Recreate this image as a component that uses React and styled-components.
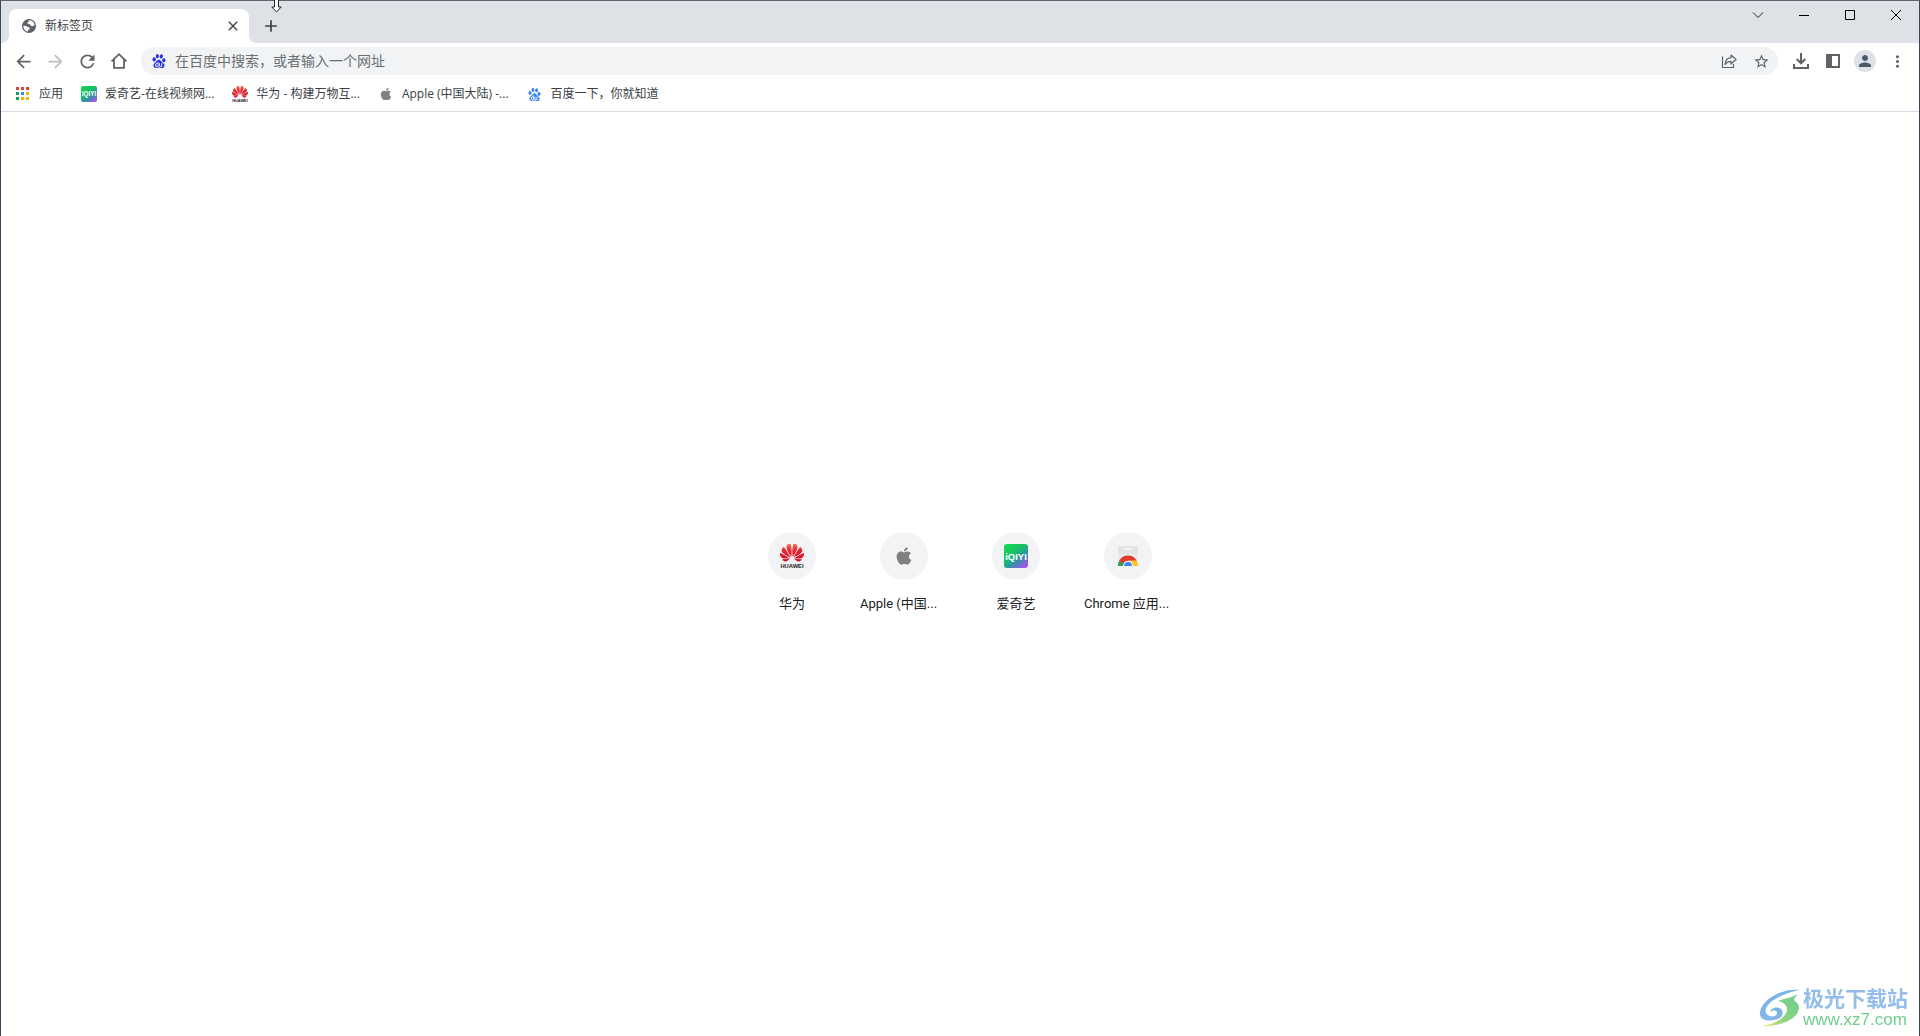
import React from 'react';
import styled, { createGlobalStyle } from 'styled-components';
import { MdArrowBack, MdArrowForward, MdRefresh, MdPerson, MdStarBorder, MdMoreVert, MdClose, MdAdd } from 'react-icons/md';
import { FaApple } from 'react-icons/fa';
import { SiBaidu, SiHuawei } from 'react-icons/si';

const GlobalStyle = createGlobalStyle`
  * {
    box-sizing: border-box;
  }
  body {
    margin: 0;
    background: #fff;
    font-family: 'Open Sans', 'Noto Sans CJK SC', sans-serif;
  }
  svg {
    display: block;
    flex: none;
  }
`;

const Window = styled.div`
  min-height: 100vh;
  display: flex;
  flex-direction: column;
  border: 1px solid #34495e;
  border-top-color: #62636d;
  border-bottom: 0;
`;

const TabStrip = styled.header`
  display: flex;
  align-items: flex-end;
  height: 42px;
  padding-left: 8px;
  background: #dee1e6;
`;

const Tab = styled.div`
  position: relative;
  display: flex;
  align-items: center;
  gap: 8px;
  width: 240px;
  height: 34px;
  padding: 0 8px 0 12px;
  background: #fff;
  border-radius: 8px 8px 0 0;
  color: #3c4043;
  &::before,
  &::after {
    content: '';
    position: absolute;
    bottom: 0;
    width: 8px;
    height: 8px;
  }
  &::before {
    left: -8px;
    background: radial-gradient(circle at 0 0, transparent 8px, #fff 8px);
  }
  &::after {
    right: -8px;
    background: radial-gradient(circle at 100% 0, transparent 8px, #fff 8px);
  }
`;

const TabTitle = styled.span`
  flex: 1;
  font-size: 12px;
  line-height: 16px;
`;

const IconButton = styled.button`
  display: flex;
  flex: none;
  align-items: center;
  justify-content: center;
  width: ${(props) => props.$size || 32}px;
  height: ${(props) => props.$size || 32}px;
  padding: 0;
  border: 0;
  border-radius: 50%;
  background: transparent;
  color: ${(props) => props.$color || '#5f6368'};
`;

const NewTab = styled(IconButton)`
  margin: 0 0 3px 8px;
`;

const WindowControls = styled.div`
  display: flex;
  align-self: flex-start;
  margin-left: auto;
`;

const WindowButton = styled.button`
  display: flex;
  align-items: center;
  justify-content: center;
  width: 46px;
  height: 28px;
  padding: 0;
  border: 0;
  background: transparent;
`;

const Toolbar = styled.nav`
  display: flex;
  align-items: center;
  height: 36px;
  padding: 0 6px;
`;

const AddressBar = styled.form`
  display: flex;
  flex: 1;
  align-items: center;
  height: 28px;
  margin: 0 7px 0 6px;
  padding: 0 1px 0 11px;
  border-radius: 14px;
  background: #f1f3f4;
`;

const AddressInput = styled.input`
  flex: 1;
  min-width: 0;
  height: 28px;
  padding: 0 0 2px 9px;
  border: 0;
  outline: 0;
  background: transparent;
  font: 14px 'Open Sans', 'Noto Sans CJK SC', sans-serif;
  color: #3c4043;
  &::placeholder {
    color: #6a6e73;
    opacity: 1;
  }
`;

const Avatar = styled.span`
  display: flex;
  align-items: center;
  justify-content: center;
  width: 22px;
  height: 22px;
  border-radius: 50%;
  background: #dee1e6;
  color: #4a5a6c;
`;

const BookmarkBar = styled.nav`
  display: flex;
  align-items: center;
  gap: 18px;
  height: 33px;
  padding: 0 14px 2px;
  border-bottom: 1px solid #dadce0;
`;

const Bookmark = styled.a`
  display: flex;
  align-items: center;
  gap: 8px;
  font-size: 12px;
  line-height: 16px;
  color: #3c4043;
  text-decoration: none;
  white-space: nowrap;
`;

const Favicon = styled.span`
  display: flex;
  align-items: center;
  justify-content: center;
  width: 16px;
  height: 16px;
`;

const Page = styled.main`
  flex: 1;
  display: flex;
  align-items: center;
  justify-content: center;
  padding-bottom: 2px;
`;

const Tiles = styled.div`
  display: flex;
`;

const Tile = styled.a`
  display: flex;
  flex-direction: column;
  align-items: center;
  gap: 14px;
  width: 112px;
  color: #202124;
  text-decoration: none;
`;

const TileIcon = styled.span`
  display: flex;
  align-items: center;
  justify-content: center;
  width: 48px;
  height: 48px;
  border-radius: 50%;
  background: #f1f3f4;
`;

const TileLabel = styled.span`
  width: 88px;
  font: 13px/20px Roboto, 'Noto Sans CJK SC', sans-serif;
  text-align: ${(props) => (props.$long ? 'left' : 'center')};
  white-space: nowrap;
`;

const Watermark = styled.aside`
  position: fixed;
  right: 12px;
  bottom: 6px;
  display: flex;
  align-items: center;
  gap: 2px;
`;

const WatermarkText = styled.div`
  display: flex;
  flex-direction: column;
  gap: 1px;
`;

const WatermarkName = styled.span`
  font: bold 21px/24px 'Noto Sans CJK SC', sans-serif;
  color: #93bdea;
`;

const WatermarkUrl = styled.span`
  font: 17px/20px 'Liberation Sans', sans-serif;
  color: #72cc8c;
`;

const Cursor = styled.svg`
  position: fixed;
  top: 0;
  left: 271px;
`;

const GlobeIcon = () => (
  <svg width="16" height="16" viewBox="0 0 16 16">
    <circle cx="8" cy="8" r="7" fill="#5f6368" />
    <path d="M7.500 2.300l3.200.4 2 1.800.9 2.500-1.800 1.300-2-.5-.7-1.500-2.300-.3L6.600 4.600l1.200-.8z" fill="#fff" />
    <path d="M2.400 8l2.200-.2 2.200 1.100 1.700.5.200 1.700-1.500.9-.4 1.700-2.600-1.200-1.500-2.300z" fill="#fff" />
  </svg>
);

const AppsIcon = () => {
  const colors = ['#db4437', '#db4437', '#db4437', '#0f9d58', '#4285f4', '#f4b400', '#0f9d58', '#f4b400', '#f4b400'];
  return (
    <svg width="16" height="16" viewBox="0 0 16 16">
      {colors.map((color, i) => (
        <rect key={i} x={1 + (i % 3) * 5} y={1 + Math.floor(i / 3) * 5} width="3" height="3" fill={color} />
      ))}
    </svg>
  );
};

const IqiyiIcon = ({ size, id }) => (
  <svg width={size} height={size} viewBox="0 0 24 24">
    <defs>
      <linearGradient id={id} x1="0.1" y1="0" x2="0.9" y2="1">
        <stop offset="0" stopColor="#16d94e" />
        <stop offset="0.4" stopColor="#18be67" />
        <stop offset="0.65" stopColor="#3590a8" />
        <stop offset="1" stopColor="#b04cf5" />
      </linearGradient>
    </defs>
    <rect width="24" height="24" rx="3" fill={`url(#${id})`} />
    <text x="12" y="15.500" textAnchor="middle" fontFamily="Liberation Sans" fontWeight="bold" fontSize="9.500" fill="#fff">iQIYI</text>
  </svg>
);

const HuaweiIcon = ({ size, id }) => (
  <svg width={size} height={size} viewBox="0 0 24 24">
    <defs>
      <linearGradient id={id} x1="0" y1="0" x2="0" y2="1">
        <stop offset="0" stopColor="#f27a60" />
        <stop offset="0.4" stopColor="#e3262f" />
        <stop offset="1" stopColor="#d0112b" />
      </linearGradient>
    </defs>
    <SiHuawei x="0" y="-3.500" size="24" fill={`url(#${id})`} />
    <text x="12" y="23.800" textAnchor="middle" fontFamily="Liberation Sans" fontWeight="bold" fontSize="5.800" fill="#222">HUAWEI</text>
  </svg>
);

const ShareIcon = () => (
  <svg width="18" height="18" viewBox="0 0 18 18" fill="none" stroke="currentColor" strokeWidth="1.2">
    <path d="M2.500 4.500v11h11v-3.500" />
    <path d="M5 12.500C5.300 8.500 7.500 6 11 5.700V3l5 4.500-5 4.500V9.300C8.300 9.300 6.500 10.300 5 12.500z" strokeLinejoin="round" />
  </svg>
);

const WebStoreIcon = () => (
  <svg width="24" height="24" viewBox="0 0 24 24">
    <path d="M2 2h20v17a3 3 0 0 1-3 3H5a3 3 0 0 1-3-3z" fill="#eceded" />
    <path d="M2 2h20v8H2z" fill="#e3e4e5" />
    <rect x="8" y="4" width="8" height="2" rx="1" fill="#f0f1f1" />
    <path d="M2 22a10 10 0 0 1 2-6.500L8 19l-1 3z" fill="#2ba24c" />
    <path d="M3.200 16.800a10 10 0 0 1 17.600 0H12a5.500 5.500 0 0 0-4.600 3z" fill="#e33b2e" />
    <path d="M12 16.800h8.800A10 10 0 0 1 22 22h-5a5 5 0 0 0-5-5.200z" fill="#fcc31e" />
    <path d="M7 22a5 5 0 0 1 10 0z" fill="#fff" />
    <path d="M8 22a4 4 0 0 1 8 0z" fill="#4285f4" />
  </svg>
);

const WatermarkLogo = () => (
  <svg width="42" height="42" viewBox="0 0 42 42">
    <defs>
      <linearGradient id="swirlBlue" x1="1" y1="0" x2="0" y2="1">
        <stop offset="0" stopColor="#6fb1e8" />
        <stop offset="1" stopColor="#88b6e6" />
      </linearGradient>
      <linearGradient id="swirlGreen" x1="1" y1="0" x2="0" y2="1">
        <stop offset="0" stopColor="#6ccb94" />
        <stop offset="0.6" stopColor="#8fd47d" />
        <stop offset="1" stopColor="#e2e87c" />
      </linearGradient>
    </defs>
    <path d="M41 3C22 1 3 13 1 25c-1 7 6 10 14 8 8-1 11-7 7-11-4-3-10-1-11 3 3-2 7-2 7 1 0 4-8 5-11 0C4 18 19 7 41 3z" fill="url(#swirlBlue)" />
    <path d="M19 14c7-3 14-3 20-7-3 4-6 5-2 8 9 7-3 25-34 24 14-2 25-9 25-17 0-4-4-7-9-8z" fill="url(#swirlGreen)" />
  </svg>
);

const bookmarks = [
  { label: '应用', icon: <AppsIcon /> },
  { label: '爱奇艺-在线视频网...', icon: <IqiyiIcon size={16} id="iqiyiSmall" /> },
  { label: '华为 - 构建万物互...', icon: <HuaweiIcon size={16} id="huaweiSmall" /> },
  { label: 'Apple (中国大陆) -...', icon: <FaApple size={14} color="#808080" /> },
  { label: '百度一下，你就知道', icon: <SiBaidu size={13} color="#3b82f0" /> },
];

const tiles = [
  { label: '华为', icon: <HuaweiIcon size={24} id="huaweiLarge" /> },
  { label: 'Apple (中国...', long: true, icon: <FaApple size={20} color="#808080" /> },
  { label: '爱奇艺', icon: <IqiyiIcon size={24} id="iqiyiLarge" /> },
  { label: 'Chrome 应用...', long: true, icon: <WebStoreIcon /> },
];

const App = () => (
  <Window>
    <GlobalStyle />
    <TabStrip>
      <Tab>
        <GlobeIcon />
        <TabTitle>新标签页</TabTitle>
        <IconButton $size={16} $color="#3c4043" aria-label="关闭标签页"><MdClose size={16} /></IconButton>
      </Tab>
      <NewTab $size={28} $color="#3c4043" aria-label="新标签页"><MdAdd size={20} /></NewTab>
      <WindowControls>
        <WindowButton aria-label="搜索标签页">
          <svg width="12" height="12" viewBox="0 0 12 12" fill="none" stroke="#222"><path d="M1 3.500l5 5 5-5" /></svg>
        </WindowButton>
        <WindowButton aria-label="最小化">
          <svg width="10" height="10" viewBox="0 0 10 10"><path d="M0 5h10v1H0z" /></svg>
        </WindowButton>
        <WindowButton aria-label="最大化">
          <svg width="10" height="10" viewBox="0 0 10 10" fill="none" stroke="#000"><path d="M.5.5h9v9h-9z" /></svg>
        </WindowButton>
        <WindowButton aria-label="关闭">
          <svg width="10" height="10" viewBox="0 0 10 10" fill="none" stroke="#000"><path d="M0 0l10 10M10 0L0 10" /></svg>
        </WindowButton>
      </WindowControls>
    </TabStrip>
    <Toolbar>
      <IconButton aria-label="返回"><MdArrowBack size={21} /></IconButton>
      <IconButton $color="#bcbec1" aria-label="前进"><MdArrowForward size={21} /></IconButton>
      <IconButton aria-label="重新加载"><MdRefresh size={21} /></IconButton>
      <IconButton aria-label="主页">
        <svg width="18" height="18" viewBox="0 0 18 18" fill="none" stroke="currentColor" strokeWidth="1.800"><path d="M1.500 9.300L9 2.200l7.500 7.100M4 7.500v8.300h10V7.500" /></svg>
      </IconButton>
      <AddressBar>
        <SiBaidu size={14} color="#2932d8" />
        <AddressInput aria-label="地址" placeholder="在百度中搜索，或者输入一个网址" />
        <IconButton type="button" aria-label="分享"><ShareIcon /></IconButton>
        <IconButton type="button" aria-label="收藏"><MdStarBorder size={17} /></IconButton>
      </AddressBar>
      <IconButton aria-label="下载">
        <svg width="16" height="16" viewBox="0 0 16 16" fill="none" stroke="currentColor" strokeWidth="2"><path d="M8 0v10M3.700 6L8 10.300 12.300 6M1 11v4h14v-4" /></svg>
      </IconButton>
      <IconButton aria-label="侧边栏">
        <svg width="14" height="14" viewBox="0 0 14 14" fill="currentColor"><path d="M0 0h14v14H0zM6 2v10h6V2z" fillRule="evenodd" /></svg>
      </IconButton>
      <IconButton aria-label="用户"><Avatar><MdPerson size={18} /></Avatar></IconButton>
      <IconButton aria-label="菜单"><MdMoreVert size={19} /></IconButton>
    </Toolbar>
    <BookmarkBar>
      {bookmarks.map((item) => (
        <Bookmark key={item.label} href="#"><Favicon>{item.icon}</Favicon>{item.label}</Bookmark>
      ))}
    </BookmarkBar>
    <Page>
      <Tiles>
        {tiles.map((item) => (
          <Tile key={item.label} href="#">
            <TileIcon>{item.icon}</TileIcon>
            <TileLabel $long={item.long}>{item.label}</TileLabel>
          </Tile>
        ))}
      </Tiles>
    </Page>
    <Watermark>
      <WatermarkLogo />
      <WatermarkText>
        <WatermarkName>极光下载站</WatermarkName>
        <WatermarkUrl>www.xz7.com</WatermarkUrl>
      </WatermarkText>
    </Watermark>
    <Cursor width="11" height="13" viewBox="0 0 11 13">
      <path d="M3.500-1v8H.8L5.500 12l4.700-5H7.500v-8z" fill="#fff" stroke="#222" />
    </Cursor>
  </Window>
);

export default App;
